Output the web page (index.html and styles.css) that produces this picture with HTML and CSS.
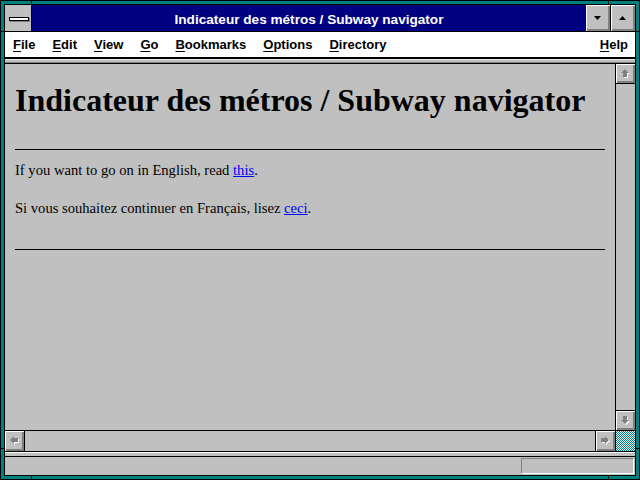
FILE: index.html
```html
<!DOCTYPE html>
<html>
<head>
<meta charset="utf-8">
<title>Indicateur des métros / Subway navigator</title>
<link rel="stylesheet" href="styles.css">
</head>
<body>
<div class="win">
  <div class="frame">
    <div class="titlebar">
      <div class="sysbox"><span class="sysbar"></span></div>
      <div class="title">Indicateur des métros / Subway navigator</div>
      <div class="tbtn min"><svg width="7" height="4" viewBox="0 0 7 4"><polygon points="0,0 7,0 3.5,4" fill="#000"/></svg></div>
      <div class="tbtn"><svg width="7" height="4" viewBox="0 0 7 4"><polygon points="0,4 7,4 3.5,0" fill="#000"/></svg></div>
    </div>
    <div class="menubar">
      <span class="mi"><u>F</u>ile</span>
      <span class="mi"><u>E</u>dit</span>
      <span class="mi"><u>V</u>iew</span>
      <span class="mi"><u>G</u>o</span>
      <span class="mi"><u>B</u>ookmarks</span>
      <span class="mi"><u>O</u>ptions</span>
      <span class="mi"><u>D</u>irectory</span>
      <span class="mi help"><u>H</u>elp</span>
    </div>
    <div class="strip"></div>
    <div class="main">
      <div class="content">
        <h1>Indicateur des métros / Subway navigator</h1>
        <hr class="rule first">
        <p class="p1">If you want to go on in English, read <a href="#">this</a>.</p>
        <p class="p2">Si vous souhaitez continuer en Français, lisez <a href="#">ceci</a>.</p>
        <hr class="rule second">
      </div>
      <div class="vscroll">
        <div class="sbtn up"><svg width="10" height="10" viewBox="0 0 10 10"><polygon transform="translate(1,1)" points="4,0 8,4 6,4 6,8 2,8 2,4 0,4" fill="#fff"/><polygon points="4,0 8,4 6,4 6,8 2,8 2,4 0,4" fill="#808080"/></svg></div>
        <div class="track"></div>
        <div class="sbtn down"><svg width="10" height="10" viewBox="0 0 10 10"><polygon transform="translate(1,1)" points="2,0 6,0 6,4 8,4 4,8 0,4 2,4" fill="#fff"/><polygon points="2,0 6,0 6,4 8,4 4,8 0,4 2,4" fill="#808080"/></svg></div>
      </div>
      <div class="hscroll">
        <div class="sbtn left"><svg width="10" height="10" viewBox="0 0 10 10"><polygon transform="translate(1,1)" points="0,4 4,0 4,2 8,2 8,6 4,6 4,8" fill="#fff"/><polygon points="0,4 4,0 4,2 8,2 8,6 4,6 4,8" fill="#808080"/></svg></div>
        <div class="track"></div>
        <div class="sbtn right"><svg width="10" height="10" viewBox="0 0 10 10"><polygon transform="translate(1,1)" points="0,2 4,2 4,0 8,4 4,8 4,6 0,6" fill="#fff"/><polygon points="0,2 4,2 4,0 8,4 4,8 4,6 0,6" fill="#808080"/></svg></div>
      </div>
      <div class="corner"></div>
    </div>
    <div class="strip2"></div>
    <div class="status"><div class="statbox"></div></div>
  </div>
  <span class="notch v tl"></span>
  <span class="notch h tl"></span>
  <span class="notch v tr"></span>
  <span class="notch h tr"></span>
  <span class="notch v bl"></span>
  <span class="notch h bl"></span>
  <span class="notch v br"></span>
  <span class="notch h br"></span>
</div>
</body>
</html>
```
FILE: styles.css
```css
* { box-sizing: border-box; }
html, body { margin: 0; padding: 0; }
body { width: 640px; height: 480px; overflow: hidden; background: #008080; }

.win {
  position: relative;
  width: 640px;
  height: 480px;
  border: 1px solid #000;
  background: #008080;
  padding: 3px;
}
.frame {
  height: 100%;
  border: 1px solid #000;
  background: #c0c0c0;
  display: flex;
  flex-direction: column;
}

/* title bar */
.titlebar { display: flex; height: 27px; border-bottom: 1px solid #000; flex: none; }
.sysbox {
  width: 27px;
  border-right: 1px solid #000;
  background: #c0c0c0;
  display: flex;
  align-items: center;
  justify-content: center;
}
.sysbar {
  display: block;
  width: 20px;
  height: 4px;
  margin-left: 1px;
  margin-top: 1px;
  border: 1px solid #000;
  background: #fff;
  box-shadow: 1px 1px 0 #808080;
}
.title {
  flex: 1;
  background: #000080;
  color: #fff;
  font-family: "Liberation Sans", Arial, sans-serif;
  font-weight: bold;
  font-size: 13.6px;
  display: flex;
  align-items: center;
  justify-content: center;
  padding-top: 2px;
}
.tbtn {
  width: 24px;
  background: #c0c0c0;
  box-shadow: inset 1px 1px 0 #fff, inset -1px -1px 0 #808080, inset -2px -2px 0 #808080;
  display: flex;
  align-items: center;
  justify-content: center;
}
.tbtn svg { display: block; margin: -1px 1px 0 0; }
.tbtn.min { width: 25px; border-right: 1px solid #000; }

/* menu */
.menubar {
  flex: none;
  height: 27px;
  background: #fff;
  border-bottom: 2px solid #000;
  display: flex;
  align-items: center;
  gap: 17px;
  padding: 0 7px 0 8px;
  font-family: "Liberation Sans", Arial, sans-serif;
  font-weight: bold;
  font-size: 13px;
  color: #000;
}
.mi u { text-decoration: underline; text-underline-offset: 2px; }
.mi.help { margin-left: auto; }

.strip {
  flex: none;
  height: 5px;
  background: linear-gradient(#e8e8e8 0 1px, #c0c0c0 1px 3px, #808080 3px 4px, #000 4px 5px);
}

/* main area */
.main {
  flex: 1;
  display: grid;
  grid-template-columns: 1fr 20px;
  grid-template-rows: 1fr 21px;
  min-height: 0;
}
.content {
  overflow: hidden;
  padding: 0 10px;
  font-family: "Liberation Serif", "Times New Roman", serif;
  color: #000;
}
.content h1 {
  margin: 18px 0 0 0;
  font-size: 32px;
  line-height: 36px;
  font-weight: bold;
  white-space: nowrap;
}
.rule { border: 0; border-top: 1px solid #000; height: 0; margin: 0; }
.rule.first { margin-top: 31px; }
.rule.second { margin-top: 32px; }
.content p { margin: 0; font-size: 14.6px; line-height: 18px; }
.p1 { margin-top: 11px !important; }
.p2 { margin-top: 20px !important; }
.content a { color: #0000ff; text-decoration: underline; }

.vscroll {
  border-left: 1px solid #000;
  display: flex;
  flex-direction: column;
}
.hscroll {
  border-top: 1px solid #000;
  display: flex;
}
.track { flex: 1; background: #c0c0c0; }
.sbtn {
  flex: none;
  background: #c0c0c0;
  display: flex;
  align-items: center;
  justify-content: center;
  box-shadow: inset 1px 1px 0 #fff, inset -1px -1px 0 #808080, inset -2px -2px 0 #808080;
}
.sbtn svg { display: block; }
.sbtn.up { height: 20px; border-bottom: 1px solid #000; }
.sbtn.down { height: 20px; border-top: 1px solid #000; }
.sbtn.left { width: 20px; border-right: 1px solid #000; }
.sbtn.right { width: 20px; border-left: 1px solid #000; }
.corner {
  border-top: 1px solid #000;
  border-left: 1px solid #000;
  background: repeating-conic-gradient(#008080 0 25%, #f0f0f0 0 50%) 0 0 / 2px 2px;
}

.strip2 {
  flex: none;
  height: 6px;
  background: linear-gradient(#000 0 1px, #fff 1px 2px, #c0c0c0 2px 5px, #000 5px 6px);
}
.status {
  flex: none;
  height: 18px;
  display: flex;
  justify-content: flex-end;
  padding: 1px 1px 1px 0;
}
.statbox {
  width: 113px;
  height: 16px;
  border-top: 1px solid #808080;
  border-left: 1px solid #808080;
  border-bottom: 1px solid #fff;
  border-right: 1px solid #fff;
}

/* frame corner notches */
.notch { position: absolute; background: #000; display: block; }
.notch.v { width: 1px; height: 5px; }
.notch.h { width: 5px; height: 1px; }
.notch.v.tl { left: 30px; top: -1px; }
.notch.h.tl { left: -1px; top: 30px; }
.notch.v.tr { left: 607px; top: -1px; }
.notch.h.tr { left: 634px; top: 30px; }
.notch.v.bl { left: 30px; top: 474px; }
.notch.h.bl { left: -1px; top: 447px; }
.notch.v.br { left: 607px; top: 474px; }
.notch.h.br { left: 634px; top: 447px; }
```
